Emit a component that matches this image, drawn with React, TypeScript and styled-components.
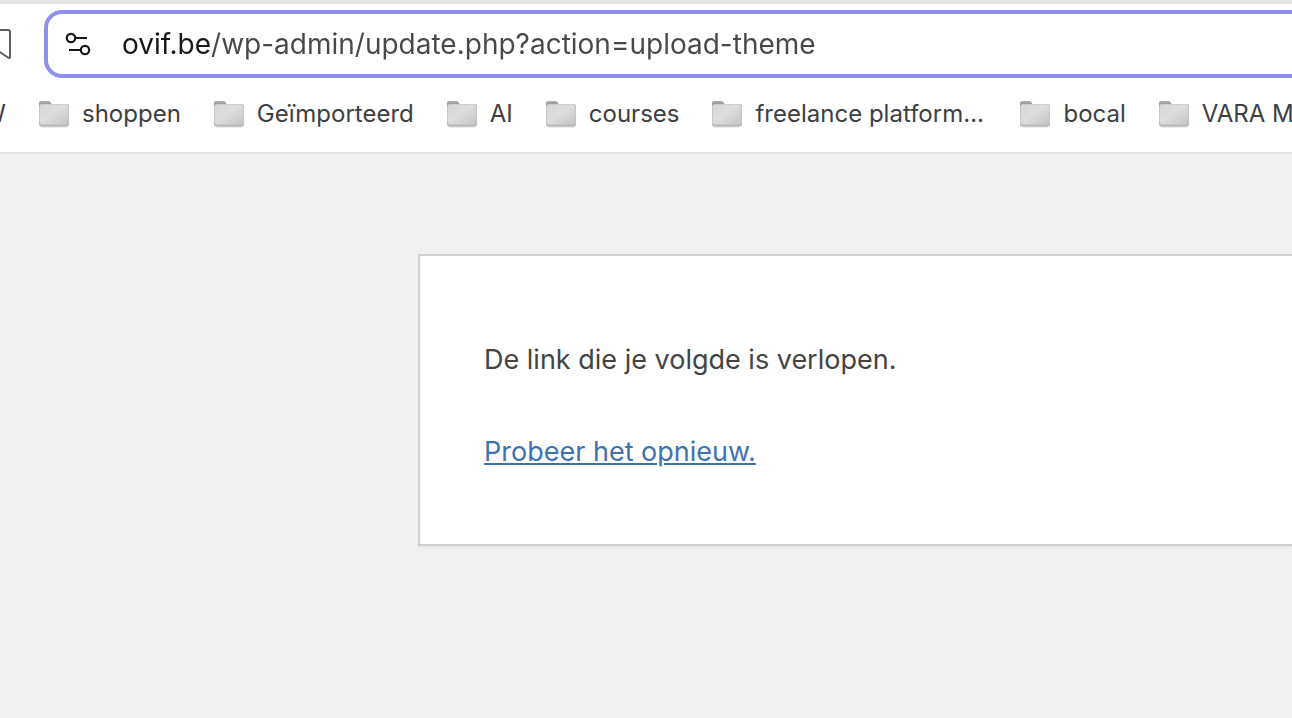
import React from "react";
import styled, { createGlobalStyle } from "styled-components";

const GlobalStyle = createGlobalStyle`
  *, *::before, *::after { box-sizing: border-box; }
  body {
    margin: 0;
    background: #f1f1f1;
    color: #444;
    font-family: Inter, "Liberation Sans", sans-serif;
    overflow-x: hidden;
  }
`;

const BrowserChrome = styled.header`
  background: #fff;
  border-top: 4px solid #e3e2e7;
  border-bottom: 2px solid #e2e1e6;
`;

const Toolbar = styled.div`
  display: flex;
  align-items: center;
  gap: 32px;
  padding-top: 6px;
`;

const BookmarkButton = styled.button`
  display: flex;
  flex: none;
  width: 12px;
  height: 32px;
  padding: 0;
  border: 0;
  background: none;
`;

const AddressBar = styled.form`
  display: flex;
  flex: 1;
  align-items: center;
  gap: 30px;
  min-width: 0;
  height: 68px;
  padding-left: 16px;
  border: 4px solid #8f8fec;
  border-right: 0;
  border-radius: 18px 0 0 18px;
`;

const SiteInfoButton = styled.button`
  display: flex;
  flex: none;
  padding: 0;
  border: 0;
  background: none;
`;

const AddressInput = styled.input`
  flex: 1;
  min-width: 0;
  height: 40px;
  padding: 0;
  border: 0;
  outline: 0;
  font: 400 28px/40px Inter, "Liberation Sans", sans-serif;
  color: transparent;
  background: linear-gradient(90deg, #18181c 90px, #48484c 90px);
  -webkit-background-clip: text;
  background-clip: text;
`;

const BookmarksBar = styled.nav`
  display: flex;
  align-items: center;
  gap: 32px;
  height: 74px;
  padding-bottom: 2px;
  overflow: hidden;
`;

const Bookmark = styled.a<{ $width?: number; $align?: string }>`
  display: flex;
  flex: none;
  align-items: center;
  justify-content: ${(p) => p.$align ?? "flex-start"};
  gap: 12px;
  width: ${(p) => (p.$width ? `${p.$width}px` : "auto")};
  overflow: hidden;
  color: #3c4043;
  font-size: 24px;
  line-height: 32px;
  text-decoration: none;
  white-space: nowrap;
`;

const Page = styled.main`
  display: flex;
  padding: 100px 0 100px 418px;
`;

const Notice = styled.section`
  flex: 1;
  padding: 33px 64px 31px;
  background: #fff;
  border: 2px solid #ccd0d4;
  border-right: 0;
  box-shadow: 0 2px 2px rgba(0, 0, 0, 0.04);
`;

const Message = styled.p`
  margin: 50px 0 40px;
  font-size: 27px;
  line-height: 42px;
`;

const RetryLink = styled.a`
  color: #3d72b0;
  text-decoration: underline;
  text-decoration-thickness: 2px;
  text-underline-offset: 2px;
`;

const FolderIcon = () => (
  <svg width="32" height="28" viewBox="0 0 32 28" aria-hidden="true">
    <defs>
      <linearGradient id="folderFront" x1="0" y1="0" x2="1" y2="1">
        <stop offset="0" stopColor="#d6d6d6" />
        <stop offset="0.45" stopColor="#dedede" />
        <stop offset="1" stopColor="#c4c4c4" />
      </linearGradient>
      <linearGradient id="folderBack" x1="0" y1="0" x2="0" y2="1">
        <stop offset="0" stopColor="#b0b0b0" />
        <stop offset="1" stopColor="#7d7d7d" />
      </linearGradient>
    </defs>
    <rect x="1.500" y="4" width="29" height="24" rx="3" fill="#ececec" />
    <path d="M1 8V3Q1 1 3 1H10.500Q12 1 12.700 2.500L13.500 4H29V8Z" fill="url(#folderBack)" />
    <rect x="1" y="4" width="30" height="22.500" rx="3" fill="#a9a9a9" />
    <rect x="1" y="4" width="30" height="21.500" rx="3" fill="#c2c2c2" />
    <rect x="1.800" y="4.500" width="28.400" height="20" rx="2.500" fill="url(#folderFront)" />
  </svg>
);

const TuneIcon = () => (
  <svg width="28" height="28" viewBox="0 0 28 28" fill="none" stroke="#18181c" strokeWidth="2.200" aria-hidden="true">
    <circle cx="7" cy="8" r="4.200" />
    <path d="M11 8H23M5 20H17" />
    <circle cx="21" cy="20" r="4.200" />
  </svg>
);

const BookmarkIcon = () => (
  <svg width="12" height="32" viewBox="12 0 12 32" fill="none" stroke="#5b5f64" strokeWidth="2" aria-hidden="true">
    <path d="M0 4Q0 2 2 2H20Q22 2 22 4V28.500Q22 31 20 29.500L11 23.500L2 29.500Q0 31 0 28.500Z" />
  </svg>
);

const folders: { name: string; width?: number }[] = [
  { name: "shoppen" },
  { name: "Geïmporteerd" },
  { name: "AI" },
  { name: "courses" },
  { name: "freelance platform…", width: 276 },
  { name: "bocal" },
  { name: "VARA M" },
];

export default function App() {
  return (
    <>
      <GlobalStyle />
      <BrowserChrome>
        <Toolbar>
          <BookmarkButton type="button" aria-label="Bladwijzer">
            <BookmarkIcon />
          </BookmarkButton>
          <AddressBar>
            <SiteInfoButton type="button" aria-label="Sitegegevens">
              <TuneIcon />
            </SiteInfoButton>
            <AddressInput
              type="text"
              aria-label="Adres"
              spellCheck={false}
              defaultValue="ovif.be/wp-admin/update.php?action=upload-theme"
            />
          </AddressBar>
        </Toolbar>
        <BookmarksBar>
          <Bookmark href="#" $width={6} $align="flex-end">
            W
          </Bookmark>
          {folders.map(({ name, width }) => (
            <Bookmark href="#" key={name} $width={width}>
              <FolderIcon />
              {name}
            </Bookmark>
          ))}
        </BookmarksBar>
      </BrowserChrome>
      <Page>
        <Notice>
          <Message>De link die je volgde is verlopen.</Message>
          <Message>
            <RetryLink href="#">Probeer het opnieuw.</RetryLink>
          </Message>
        </Notice>
      </Page>
    </>
  );
}
